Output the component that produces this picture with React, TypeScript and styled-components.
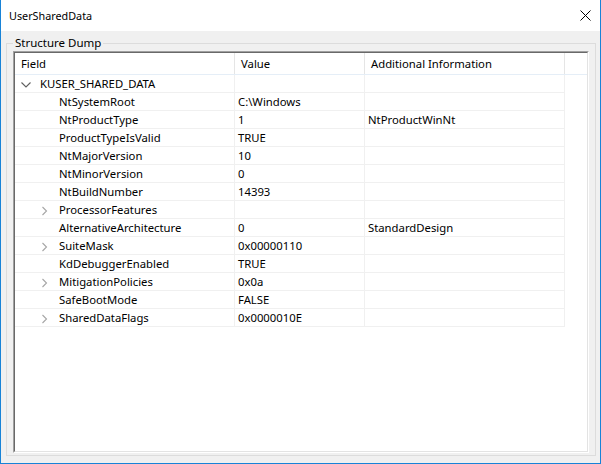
import React from 'react';
import styled, { createGlobalStyle } from 'styled-components';

const FONT = `"Noto Sans", "Liberation Sans", sans-serif`;

const Global = createGlobalStyle`
  html, body { margin: 0; padding: 0; background: #ffffff; }
  body { font-family: ${FONT}; }
`;

const Window = styled.div`
  width: 601px;
  height: 464px;
  box-sizing: border-box;
  border: 1px solid #1883d7;
  border-top: none;
  display: flex;
  flex-direction: column;
  font-family: ${FONT};
  font-size: 11.3px;
  color: #000;
  overflow: hidden;
`;

const TitleBar = styled.div`
  flex: none;
  height: 31px;
  background: #ffffff;
  display: flex;
  align-items: center;
  justify-content: space-between;
  padding: 0 9px 0 8px;
`;

const Title = styled.span`
  font-size: 10.8px;
  line-height: 16px;
`;

const CloseButton = styled.div`
  display: flex;
  align-items: center;
  justify-content: center;
  width: 11px;
  height: 11px;
`;

const Body = styled.div`
  flex: 1;
  min-height: 0;
  background: #f0f0f0;
  padding: 5px 4px 7px 5px;
  display: flex;
  flex-direction: column;
`;

const GroupBox = styled.fieldset`
  flex: 1;
  min-height: 0;
  margin: 0;
  border: 1px solid #dcdcdc;
  padding: 1px 6px 2px 6px;
  display: flex;
  flex-direction: column;
`;

const Legend = styled.legend`
  padding: 0 2px;
  line-height: 14px;
  font-size: 11.5px;
`;

const ListOuter = styled.div`
  flex: 1;
  min-height: 0;
  display: flex;
  border-style: solid;
  border-width: 1px;
  border-color: #a0a0a0 #ffffff #ffffff #a0a0a0;
`;

const ListInner = styled.div`
  flex: 1;
  background: #ffffff;
  border-style: solid;
  border-width: 1px;
  border-color: #696969 #e3e3e3 #e3e3e3 #696969;
  display: flex;
  flex-direction: column;
`;

const COLS = '220px 130px 200px';

const HeaderRow = styled.div`
  display: grid;
  grid-template-columns: ${COLS} 1fr;
  height: 22px;
  box-sizing: border-box;
  border-bottom: 1px solid #e5eef7;
`;

const HeaderCell = styled.div<{ $last?: boolean }>`
  display: flex;
  align-items: center;
  padding-left: 6px;
  border-right: ${(p) => (p.$last ? 'none' : '1px solid #e5e5e5')};
  white-space: nowrap;
`;

const Row = styled.div`
  display: grid;
  grid-template-columns: ${COLS};
  height: 18px;
`;

const Cell = styled.div`
  display: flex;
  align-items: center;
  box-sizing: border-box;
  height: 18px;
  padding-left: 3px;
  border-right: 1px solid #f0f0f0;
  border-bottom: 1px solid #f0f0f0;
  white-space: nowrap;
  overflow: hidden;
`;

const TreeCell = styled(Cell)<{ $level: number }>`
  padding-left: ${(p) => 3 + p.$level * 19}px;
  gap: 6px;
`;

const Expander = styled.span`
  flex: none;
  width: 16px;
  height: 16px;
  display: flex;
`;

type Node = {
  name: string;
  value?: string;
  info?: string;
  level: number;
  expander?: 'open' | 'closed';
};

const rows: Node[] = [
  { name: 'KUSER_SHARED_DATA', level: 0, expander: 'open' },
  { name: 'NtSystemRoot', value: 'C:\\Windows', level: 1 },
  { name: 'NtProductType', value: '1', info: 'NtProductWinNt', level: 1 },
  { name: 'ProductTypeIsValid', value: 'TRUE', level: 1 },
  { name: 'NtMajorVersion', value: '10', level: 1 },
  { name: 'NtMinorVersion', value: '0', level: 1 },
  { name: 'NtBuildNumber', value: '14393', level: 1 },
  { name: 'ProcessorFeatures', level: 1, expander: 'closed' },
  { name: 'AlternativeArchitecture', value: '0', info: 'StandardDesign', level: 1 },
  { name: 'SuiteMask', value: '0x00000110', level: 1, expander: 'closed' },
  { name: 'KdDebuggerEnabled', value: 'TRUE', level: 1 },
  { name: 'MitigationPolicies', value: '0x0a', level: 1, expander: 'closed' },
  { name: 'SafeBootMode', value: 'FALSE', level: 1 },
  { name: 'SharedDataFlags', value: '0x0000010E', level: 1, expander: 'closed' },
];

function Chevron({ kind }: { kind?: 'open' | 'closed' }) {
  return (
    <Expander>
      {kind === 'open' && (
        <svg width="16" height="16" viewBox="0 0 16 16">
          <polyline points="3.5,6.5 8,11 12.5,6.5" fill="none" stroke="#5f5f5f" strokeWidth="1.1" />
        </svg>
      )}
      {kind === 'closed' && (
        <svg width="16" height="16" viewBox="0 0 16 16">
          <polyline points="5.5,5 9.5,9 5.5,13" fill="none" stroke="#a6a6a6" strokeWidth="1.1" />
        </svg>
      )}
    </Expander>
  );
}

export default function App() {
  return (
    <>
      <Global />
      <Window>
        <TitleBar>
          <Title>UserSharedData</Title>
          <CloseButton>
            <svg width="11" height="11" viewBox="0 0 11 11">
              <path d="M0.5 0.5 L10.5 10.5 M10.5 0.5 L0.5 10.5" stroke="#000" strokeWidth="1" />
            </svg>
          </CloseButton>
        </TitleBar>
        <Body>
          <GroupBox>
            <Legend>Structure Dump</Legend>
            <ListOuter>
              <ListInner>
                <HeaderRow>
                  <HeaderCell>Field</HeaderCell>
                  <HeaderCell>Value</HeaderCell>
                  <HeaderCell>Additional Information</HeaderCell>
                  <HeaderCell $last />
                </HeaderRow>
                {rows.map((r) => (
                  <Row key={r.name}>
                    <TreeCell $level={r.level}>
                      <Chevron kind={r.expander} />
                      <span>{r.name}</span>
                    </TreeCell>
                    <Cell>{r.value ?? ''}</Cell>
                    <Cell>{r.info ?? ''}</Cell>
                  </Row>
                ))}
              </ListInner>
            </ListOuter>
          </GroupBox>
        </Body>
      </Window>
    </>
  );
}
